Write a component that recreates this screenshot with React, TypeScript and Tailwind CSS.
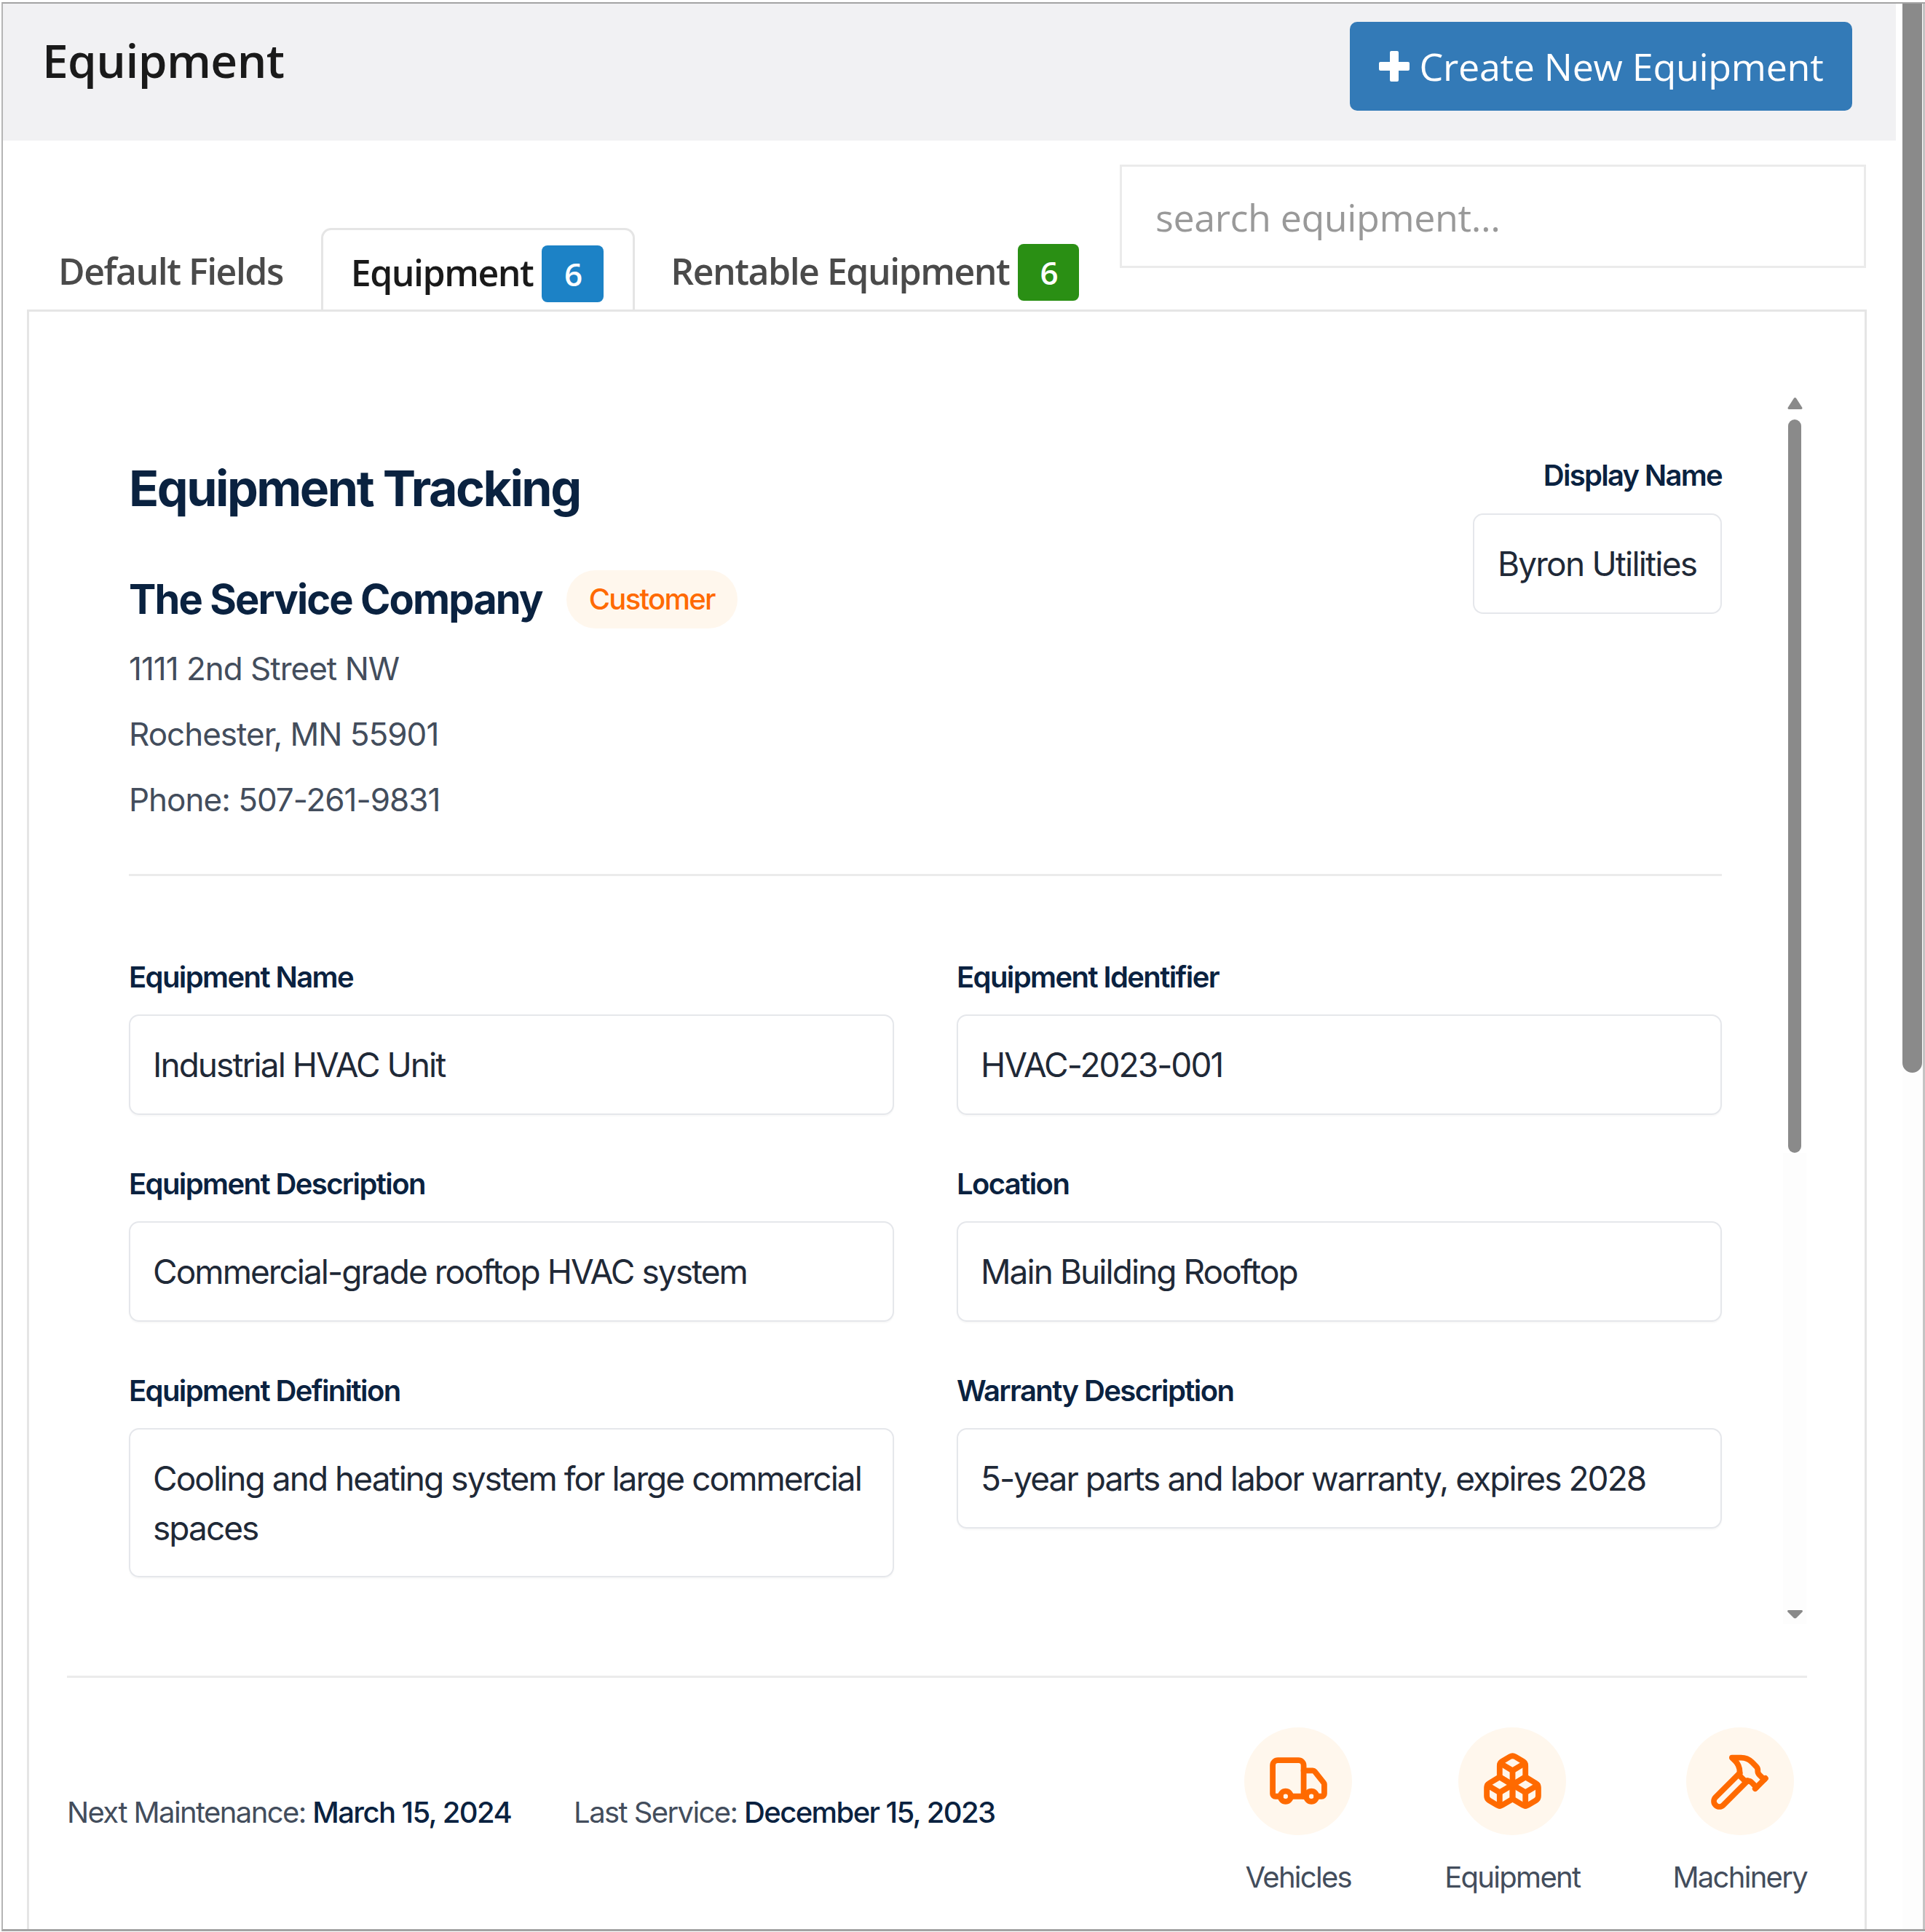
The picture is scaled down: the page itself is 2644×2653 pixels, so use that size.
import { Boxes, Hammer, Truck } from "lucide-react"

const fields = [
    { label: "Equipment Name", value: "Industrial HVAC Unit", tall: false },
    { label: "Equipment Identifier", value: "HVAC-2023-001", tall: false },
    { label: "Equipment Description", value: "Commercial-grade rooftop HVAC system", tall: false },
    { label: "Location", value: "Main Building Rooftop", tall: false },
    { label: "Equipment Definition", value: "Cooling and heating system for large commercial spaces", tall: true },
    { label: "Warranty Description", value: "5-year parts and labor warranty, expires 2028", tall: false },
]

const categories = [
    { label: "Vehicles", Icon: Truck },
    { label: "Equipment", Icon: Boxes },
    { label: "Machinery", Icon: Hammer },
]

export default function App() {
    return (
        <div className="w-[2644px] h-[2653px] pt-[3px] pl-[2px] overflow-hidden bg-white font-['Open_Sans',sans-serif]">
            <div className="flex w-[2642px] h-[2649px] overflow-hidden border-t-[2px] border-b-[3px] border-l-[2px] border-t-[#a3a3a3] border-b-[#a3a3a3] border-l-[#b5b5b5]">
                <div className="w-[2609px] shrink-0">
                    {/* HEADER */}
                    <header className="flex justify-between w-[2600px] h-[188px] bg-[#f1f1f3]">
                        <h1 className="ml-[54px] mt-[43px] text-[64px] leading-[70px] tracking-[-0.6px] font-semibold text-[#1a1a1a]">Equipment</h1>
                        <button className="flex items-center justify-center w-[690px] h-[122px] mt-[25px] mr-[60px] rounded-[10px] bg-[#337ab7] text-[52px] tracking-[-0.3px] text-white">
                            <svg width="42" height="42" viewBox="0 0 42 42" className="mr-[14px]" fill="#fff">
                                <path d="M15 2a2 2 0 0 1 2-2h8a2 2 0 0 1 2 2v13h13a2 2 0 0 1 2 2v8a2 2 0 0 1-2 2H27v13a2 2 0 0 1-2 2h-8a2 2 0 0 1-2-2V27H2a2 2 0 0 1-2-2v-8a2 2 0 0 1 2-2h13z" />
                            </svg>
                            Create New Equipment
                        </button>
                    </header>

                    {/* TABS + SEARCH */}
                    <div className="flex justify-between items-end h-[232px] pl-[33px] pr-[50px]">
                        <nav className="flex items-end text-[50px] tracking-[-1.5px] font-semibold text-[#4a4a4a]">
                            <div className="flex items-center h-[112px] pl-[43px] pr-[45px] mr-[7px] pt-[7px]">Default Fields</div>
                            <div className="flex items-center h-[112px] pl-[38px] pr-[40px] mr-[7px] pt-[7px] bg-white border-[3px] border-b-0 border-[#e5e5e5] rounded-t-[14px] text-[#1a1a1a]">
                                Equipment
                                <span className="flex items-center justify-center w-[85px] h-[78px] ml-[12px] mt-[3px] rounded-[8px] bg-[#1c82c6] text-[44px] font-semibold text-white">6</span>
                            </div>
                            <div className="flex items-center h-[112px] pl-[42px] pt-[7px]">
                                Rentable Equipment
                                <span className="flex items-center justify-center w-[84px] h-[78px] ml-[12px] mt-[3px] rounded-[8px] bg-[#2a8f14] text-[44px] font-semibold text-white">6</span>
                            </div>
                        </nav>
                        <div className="flex items-center w-[1025px] h-[142px] mb-[57px] pl-[46px] pt-[2px] border-[3px] border-[#ebebeb] text-[52px] tracking-[-0.4px] text-[#999]">search equipment...</div>
                    </div>

                    {/* PANEL */}
                    <div className="ml-[33px] w-[2527px] h-[2300px] border-[3px] border-[#e5e5e5] pl-[52px] pr-[79px] pt-[118px] font-['Inter',sans-serif]">
                        <div className="flex h-[1758px] border-b-[3px] border-[#ebebeb]">
                            <div className="w-[2273px] pl-[85px]">
                                <div className="flex justify-between">
                                    <div>
                                        <h2 className="mt-[84px] text-[68px] leading-[80px] tracking-[-2.5px] font-bold text-[#0a2240]">Equipment Tracking</h2>
                                        <div className="flex items-center mt-[73px]">
                                            <h3 className="text-[56px] leading-[80px] tracking-[-1.9px] font-bold text-[#0a2240]">The Service Company</h3>
                                            <span className="flex items-center h-[80px] ml-[33px] px-[31px] rounded-full bg-[#fff7ed] text-[40px] tracking-[-1.7px] font-medium text-[#ff6a00]">Customer</span>
                                        </div>
                                        <div className="mt-[10px] text-[44px] leading-[90px] tracking-[-1px] text-[#434d5c]">
                                            <p>1111 2nd Street NW</p>
                                            <p>Rochester, MN 55901</p>
                                            <p>Phone: 507-261-9831</p>
                                        </div>
                                    </div>
                                    <div className="flex flex-col items-end mt-[82px]">
                                        <label className="text-[40px] leading-[50px] tracking-[-1.7px] font-semibold text-[#0a2240]">Display Name</label>
                                        <div className="flex items-center w-[342px] h-[138px] mt-[27px] px-[32px] border-[2px] border-[#e5e7eb] rounded-[14px] text-[46px] tracking-[-1.8px] whitespace-nowrap text-[#1f2937]">Byron Utilities</div>
                                    </div>
                                </div>

                                <div className="h-[3px] mt-[57px] bg-[#ebebeb]" />

                                <div className="grid grid-cols-2 items-start gap-x-[86px] gap-y-[70px] mt-[114px]">
                                    {fields.map((f) => (
                                        <div key={f.label}>
                                            <label className="block text-[40px] leading-[50px] tracking-[-1.6px] font-semibold text-[#0a2240]">{f.label}</label>
                                            <div className={`flex items-center mt-[26px] px-[31px] border-[2px] border-[#e5e7eb] rounded-[14px] text-[46px] leading-[68px] tracking-[-1.95px] text-[#1f2937] shadow-[0_2px_2px_rgba(0,0,0,0.03)] ${f.tall ? "h-[205px]" : "h-[138px]"}`}>
                                                {f.value}
                                            </div>
                                        </div>
                                    ))}
                                </div>
                            </div>

                            {/* inner scrollbar */}
                            <div className="flex flex-col items-center w-[32px] h-[1684px] ml-[84px]">
                                <svg width="21" height="16" viewBox="0 0 21 16" fill="#8a8a8a" className="shrink-0">
                                    <path d="M8.8 1a2 2 0 0 1 3.4 0l8 12.5a1.6 1.6 0 0 1-1.4 2.5H2.2a1.6 1.6 0 0 1-1.4-2.5z" />
                                </svg>
                                <div className="w-[18px] h-[1007px] mt-[14px] shrink-0 rounded-full bg-[#8a8a8a]" />
                                <div className="flex flex-1 flex-col justify-end items-center w-full bg-[#fdfdfd]">
                                    <svg width="21" height="19" viewBox="0 0 21 19" fill="#8a8a8a" className="shrink-0">
                                        <path d="M1.5 0h18a1.4 1.4 0 0 1 1 2.4l-8 8a3 3 0 0 1-4 0l-8-8a1.4 1.4 0 0 1 1-2.4z" />
                                    </svg>
                                </div>
                            </div>
                        </div>

                        {/* FOOTER */}
                        <div className="flex justify-between items-center mt-[65px] h-[236px]">
                            <div className="flex gap-[86px] pt-[3px] text-[40px] tracking-[-1.6px] text-[#434d5c]">
                                <p>Next Maintenance: <span className="font-medium text-[#0a2240]">March 15, 2024</span></p>
                                <p>Last Service: <span className="font-medium text-[#0a2240]">December 15, 2023</span></p>
                            </div>
                            <div className="flex gap-[127px]">
                                {categories.map(({ label, Icon }) => (
                                    <div key={label} className="flex flex-col items-center">
                                        <div className="flex items-center justify-center w-[148px] h-[148px] rounded-full bg-[#fff7ed]">
                                            <Icon size={85} strokeWidth={2.2} className="text-[#ff6a00]" />
                                        </div>
                                        <span className="mt-[33px] text-[40px] leading-[50px] tracking-[-1.7px] text-[#434d5c]">{label}</span>
                                    </div>
                                ))}
                            </div>
                        </div>
                    </div>
                </div>

                {/* page scrollbar */}
                <div className="w-[31px] border-r-[3px] border-[#c4c4c4] bg-[#fdfdfd]">
                    <div className="w-[27px] h-[1468px] rounded-b-[14px] bg-[#8a8a8a]" />
                </div>
            </div>
        </div>
    )
}
